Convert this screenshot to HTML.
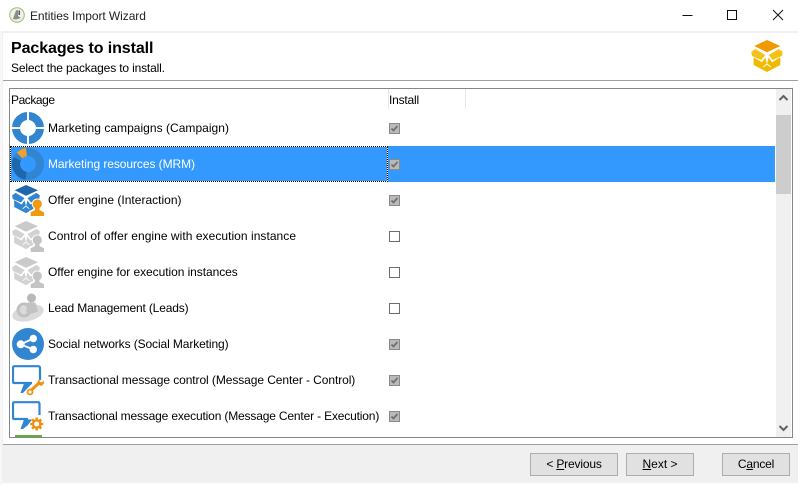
<!DOCTYPE html>
<html><head><meta charset="utf-8"><style>
html,body{margin:0;padding:0;background:#fff}
body{position:relative;width:802px;height:485px;overflow:hidden;font-family:"Liberation Sans",sans-serif;font-size:12px;color:#000}
div,svg{position:absolute}
.t{white-space:nowrap;line-height:16px;height:16px;left:48px}
.cb{left:389px;width:9px;height:9px;border:1px solid #6e6e6e;background:#fff}
.btn{background:#e1e1e1;border:1px solid #adadad;height:21px;top:453px;line-height:21px;text-align:center}
u{text-decoration:underline}
</style></head><body>
<div style="left:0;top:0;width:802px;height:31px;background:#fff"></div>
<div style="left:0;top:31px;width:802px;height:454px;background:#f0f0f0"></div>
<div style="left:0;top:483px;width:802px;height:2px;background:#fff"></div>
<div style="left:798px;top:31px;width:4px;height:454px;background:#fff"></div>
<div style="left:0;top:31px;width:2px;height:454px;background:#f7f7f7"></div>

<svg style="left:9px;top:7px" width="16" height="16" viewBox="0 0 16 16"><circle cx="8" cy="8" r="7.300" fill="#eef0ea" stroke="#9cc068" stroke-width="1"/><path d="M4 12 7 3.500 9 3 9 9 12 11 7 12.500Z" fill="#8a8a8a"/><path d="M9.500 3.500 11 3.500 11 8 9.500 8Z" fill="#555"/></svg>
<div class="t" style="left:30px;top:8px;color:#222;letter-spacing:-.07px">Entities Import Wizard</div>
<svg style="left:680px;top:8px" width="110" height="16" viewBox="0 0 110 16"><path d="M2.500 7.500H12.500" stroke="#111" stroke-width="1" fill="none"/><rect x="47.500" y="2.500" width="9" height="9" fill="none" stroke="#111"/><path d="M93 2 103 12M103 2 93 12" stroke="#111" stroke-width="1" fill="none"/></svg>

<div style="left:3px;top:33px;width:795px;height:47px;background:#fff"></div>
<div style="left:3px;top:80px;width:795px;height:1px;background:#a0a0a0"></div>
<div style="left:3px;top:81px;width:795px;height:363px;background:#fff"></div>
<div style="left:3px;top:444px;width:795px;height:1px;background:#a0a0a0"></div>

<div class="t" style="left:11px;top:40px;font-size:16px;font-weight:bold;line-height:18px;height:18px;letter-spacing:-.09px">Packages to install</div>
<div class="t" style="left:11px;top:60px;letter-spacing:-.16px">Select the packages to install.</div>

<svg style="left:751px;top:39px" width="32" height="34" viewBox="0 0 31.400 34">
<path d="M15.700 1 29 7 15.700 13.300 3 7Z" fill="#f09a00"/>
<path d="M0 12.700 4 10 14 16 10 21 .7 17Z M31.400 12.700 27.400 10 17.400 16 21.400 21 30.700 17Z" fill="#f5c21c"/>
<path d="M2.300 18.300 10.700 23.300 14 18.500 15.700 25 17.400 18.500 20.700 23.300 29 18.300 29 26 15.700 33 2.300 26Z" fill="#f0ba00"/>
<path d="M12 28 15.700 25 19.400 28" fill="none" stroke="#fff" stroke-width="1"/>
</svg>

<!-- list -->
<div style="left:9px;top:88px;width:782px;height:348px;border:1px solid #82878c;background:#fff"></div>
<div style="left:388px;top:89px;width:1px;height:20px;background:#e5e5e5"></div>
<div style="left:465px;top:89px;width:1px;height:20px;background:#e5e5e5"></div>
<div class="t" style="left:11px;top:92px;letter-spacing:-.44px">Package</div>
<div class="t" style="left:389px;top:92px;letter-spacing:-.2px">Install</div>

<!-- selected -->
<div style="left:10px;top:146px;width:765px;height:36px;background:#3399ff"></div>
<div style="left:10px;top:146px;width:376px;height:34px;border:1px solid #fff"></div>
<div style="left:10px;top:146px;width:376px;height:34px;border:1px dotted #000"></div>

<!-- rows text -->
<div class="t" style="top:120px;letter-spacing:.03px">Marketing campaigns (Campaign)</div>
<div class="t" style="top:156px;color:#fff;letter-spacing:-.07px">Marketing resources (MRM)</div>
<div class="t" style="top:192px;letter-spacing:.015px">Offer engine (Interaction)</div>
<div class="t" style="top:228px;letter-spacing:.045px">Control of offer engine with execution instance</div>
<div class="t" style="top:264px;letter-spacing:-.06px">Offer engine for execution instances</div>
<div class="t" style="top:300px;letter-spacing:-.16px">Lead Management (Leads)</div>
<div class="t" style="top:336px;letter-spacing:-.105px">Social networks (Social Marketing)</div>
<div class="t" style="top:372px;letter-spacing:-.08px">Transactional message control (Message Center - Control)</div>
<div class="t" style="top:408px;letter-spacing:-.165px">Transactional message execution (Message Center - Execution)</div>

<!-- checkboxes -->
<svg width="0" height="0"><defs>
<symbol id="ck" viewBox="0 0 11 11"><rect x=".5" y=".5" width="10" height="10" fill="#b9b9b9" stroke="#8a8a8a"/><path d="M2.500 5.500 4.500 7.500 8.500 3" fill="none" stroke="#6f6f6f" stroke-width="1.700"/></symbol>
<symbol id="box" viewBox="0 0 31.400 34"><path d="M0 12.700 4 10 14 16 10 21 .7 17Z M31.400 12.700 27.400 10 17.400 16 21.400 21 30.700 17Z"/><path d="M2.300 18.300 10.700 23.300 14 18.500 15.700 25 17.400 18.500 20.700 23.300 29 18.300 29 26 15.700 33 2.300 26Z"/><path d="M12 28 15.700 25 19.400 28" fill="none" stroke="#fff" stroke-width="1"/></symbol>
</defs></svg>
<svg style="left:389px;top:123px" width="11" height="11"><use href="#ck"/></svg>
<svg style="left:389px;top:159px" width="11" height="11"><use href="#ck"/></svg>
<svg style="left:389px;top:195px" width="11" height="11"><use href="#ck"/></svg>
<div class="cb" style="top:231px"></div>
<div class="cb" style="top:267px"></div>
<div class="cb" style="top:303px"></div>
<svg style="left:389px;top:339px" width="11" height="11"><use href="#ck"/></svg>
<svg style="left:389px;top:375px" width="11" height="11"><use href="#ck"/></svg>
<svg style="left:389px;top:411px" width="11" height="11"><use href="#ck"/></svg>

<!-- icons -->
<svg style="left:12px;top:112px" width="32" height="32" viewBox="0 0 32 32"><circle cx="16" cy="16" r="12" fill="none" stroke="#3286d1" stroke-width="8"/><path d="M16 0V8M16 24V32M0 16H8M24 16H32" stroke="#fff" stroke-width="2"/></svg>
<svg style="left:12px;top:148px" width="32" height="32" viewBox="0 0 32 32" fill="none"><circle cx="16" cy="16" r="12" stroke="#3286d1" stroke-width="8"/><path d="M5.200 10.800A12 12 0 0 0 14 27.800" stroke="#1f66ad" stroke-width="8"/><path d="M7.500 7.500A12 12 0 0 1 14.500 4.100" stroke="#f0a030" stroke-width="8"/></svg>

<svg style="left:12px;top:184px" width="32" height="32" viewBox="0 0 32 32" fill="#3286d1"><use href="#box" width="28" height="30"/><path d="M14 1 26 6.300 14 11.800 2.700 6.300Z" fill="#1f66ad"/><path d="M25.300 14.500a5.500 5.500 0 0 1 4 9.300V25L33 27V33H17V27L21.300 25V23.800A5.500 5.500 0 0 1 25.300 14.500Z" fill="#fff"/><circle cx="25.300" cy="20" r="4.600" fill="#f09a10"/><path d="M23 23.500H27.500V26L32 28.200V32H18.700V28.200L23 26Z" fill="#f09a10"/></svg>
<svg style="left:12px;top:220px" width="32" height="32" viewBox="0 0 32 32" fill="#d2d2d2"><use href="#box" width="28" height="30"/><path d="M14 1 26 6.300 14 11.800 2.700 6.300Z" fill="#cacaca"/><path d="M25.300 14.500a5.500 5.500 0 0 1 4 9.300V25L33 27V33H17V27L21.300 25V23.800A5.500 5.500 0 0 1 25.300 14.500Z" fill="#fff"/><circle cx="25.300" cy="20" r="4.600" fill="#c4c4c4"/><path d="M23 23.500H27.500V26L32 28.200V32H18.700V28.200L23 26Z" fill="#c4c4c4"/></svg>
<svg style="left:12px;top:256px" width="32" height="32" viewBox="0 0 32 32" fill="#d2d2d2"><use href="#box" width="28" height="30"/><path d="M14 1 26 6.300 14 11.800 2.700 6.300Z" fill="#cacaca"/><path d="M25.300 14.500a5.500 5.500 0 0 1 4 9.300V25L33 27V33H17V27L21.300 25V23.800A5.500 5.500 0 0 1 25.300 14.500Z" fill="#fff"/><circle cx="25.300" cy="20" r="4.600" fill="#c4c4c4"/><path d="M23 23.500H27.500V26L32 28.200V32H18.700V28.200L23 26Z" fill="#c4c4c4"/></svg>
<svg style="left:12px;top:292px" width="32" height="32" viewBox="0 0 32 32"><ellipse cx="16" cy="21" rx="16" ry="8" transform="rotate(-14 16 21)" fill="#dadada"/><circle cx="12" cy="18" r="6" fill="none" stroke="#c0c0c0" stroke-width="3"/><circle cx="19.500" cy="6" r="4.500" fill="#b8b8b8"/><path d="M15.500 10.500H23.500L26 19Q20 23.500 14 20Z" fill="#c2c2c2"/></svg>
<svg style="left:12px;top:328px" width="32" height="32" viewBox="0 0 32 32"><circle cx="16" cy="16" r="16" fill="#3286d1"/><path d="M8.700 16.300 21.300 10.500M8.700 16.300 21.300 21.500" stroke="#fff" stroke-width="1.800"/><circle cx="8.700" cy="16.300" r="4" fill="#fff"/><circle cx="21.300" cy="10.500" r="3.700" fill="#fff"/><circle cx="21.300" cy="21.500" r="3.700" fill="#fff"/></svg>
<svg style="left:12px;top:365px" width="32" height="32" viewBox="0 0 32 32"><path d="M2 1.200H26Q28 1.200 28 3V15M20 18H2Q1 18 1 16V3Q1 1.200 2.500 1.200" fill="none" stroke="#3286d1" stroke-width="2.200"/><path d="M12 18.500H20L11 28H8.500Z" fill="#3286d1"/><path d="M19.500 25 27 18" stroke="#f0900f" stroke-width="3" fill="none"/><circle cx="18" cy="27" r="2.500" fill="#fff" stroke="#f0900f" stroke-width="1.800"/><path d="M26 15.500A4.500 4.500 0 0 0 29 21A4.500 4.500 0 0 0 32 15.500L29.800 17.500 27.800 16.800 27.800 14.500Z" fill="#f0900f"/></svg>
<svg style="left:12px;top:401px" width="32" height="32" viewBox="0 0 32 32"><path d="M2 1.200H26Q27.500 1.200 27.500 3V14M16 18H2Q1 18 1 16V3Q1 1.200 2.500 1.200" fill="none" stroke="#3286d1" stroke-width="2.200"/><path d="M12 18.500H20L16 24 11 28H8.500Z" fill="#3286d1"/><path d="M24.700 16.500V29.500M18.200 23H31.200M20.100 18.400 29.300 27.600M29.300 18.400 20.100 27.600" stroke="#f0900f" stroke-width="2.400"/><circle cx="24.700" cy="23" r="4.800" fill="#f0900f"/><circle cx="24.700" cy="23" r="2.500" fill="#fff"/></svg>
<div style="left:15px;top:435px;width:27px;height:2px;background:#63ad3c"></div>

<!-- scrollbar -->
<div style="left:776px;top:89px;width:15px;height:348px;background:#f0f0f0"></div>
<div style="left:776px;top:115px;width:15px;height:79px;background:#cdcdcd"></div>
<svg style="left:776px;top:89px" width="15" height="348" viewBox="0 0 15 348"><path d="M3.500 11 7.500 7 11.500 11" fill="none" stroke="#606060" stroke-width="2"/><path d="M3.500 337 7.500 341 11.500 337" fill="none" stroke="#606060" stroke-width="2"/></svg>

<!-- buttons -->
<div class="btn" style="left:530px;width:86px;letter-spacing:-.17px">&lt; <u>P</u>revious</div>
<div class="btn" style="left:626px;width:66px"><u>N</u>ext &gt;</div>
<div class="btn" style="left:722px;width:66px;letter-spacing:-.2px">C<u>a</u>ncel</div>
</body></html>
